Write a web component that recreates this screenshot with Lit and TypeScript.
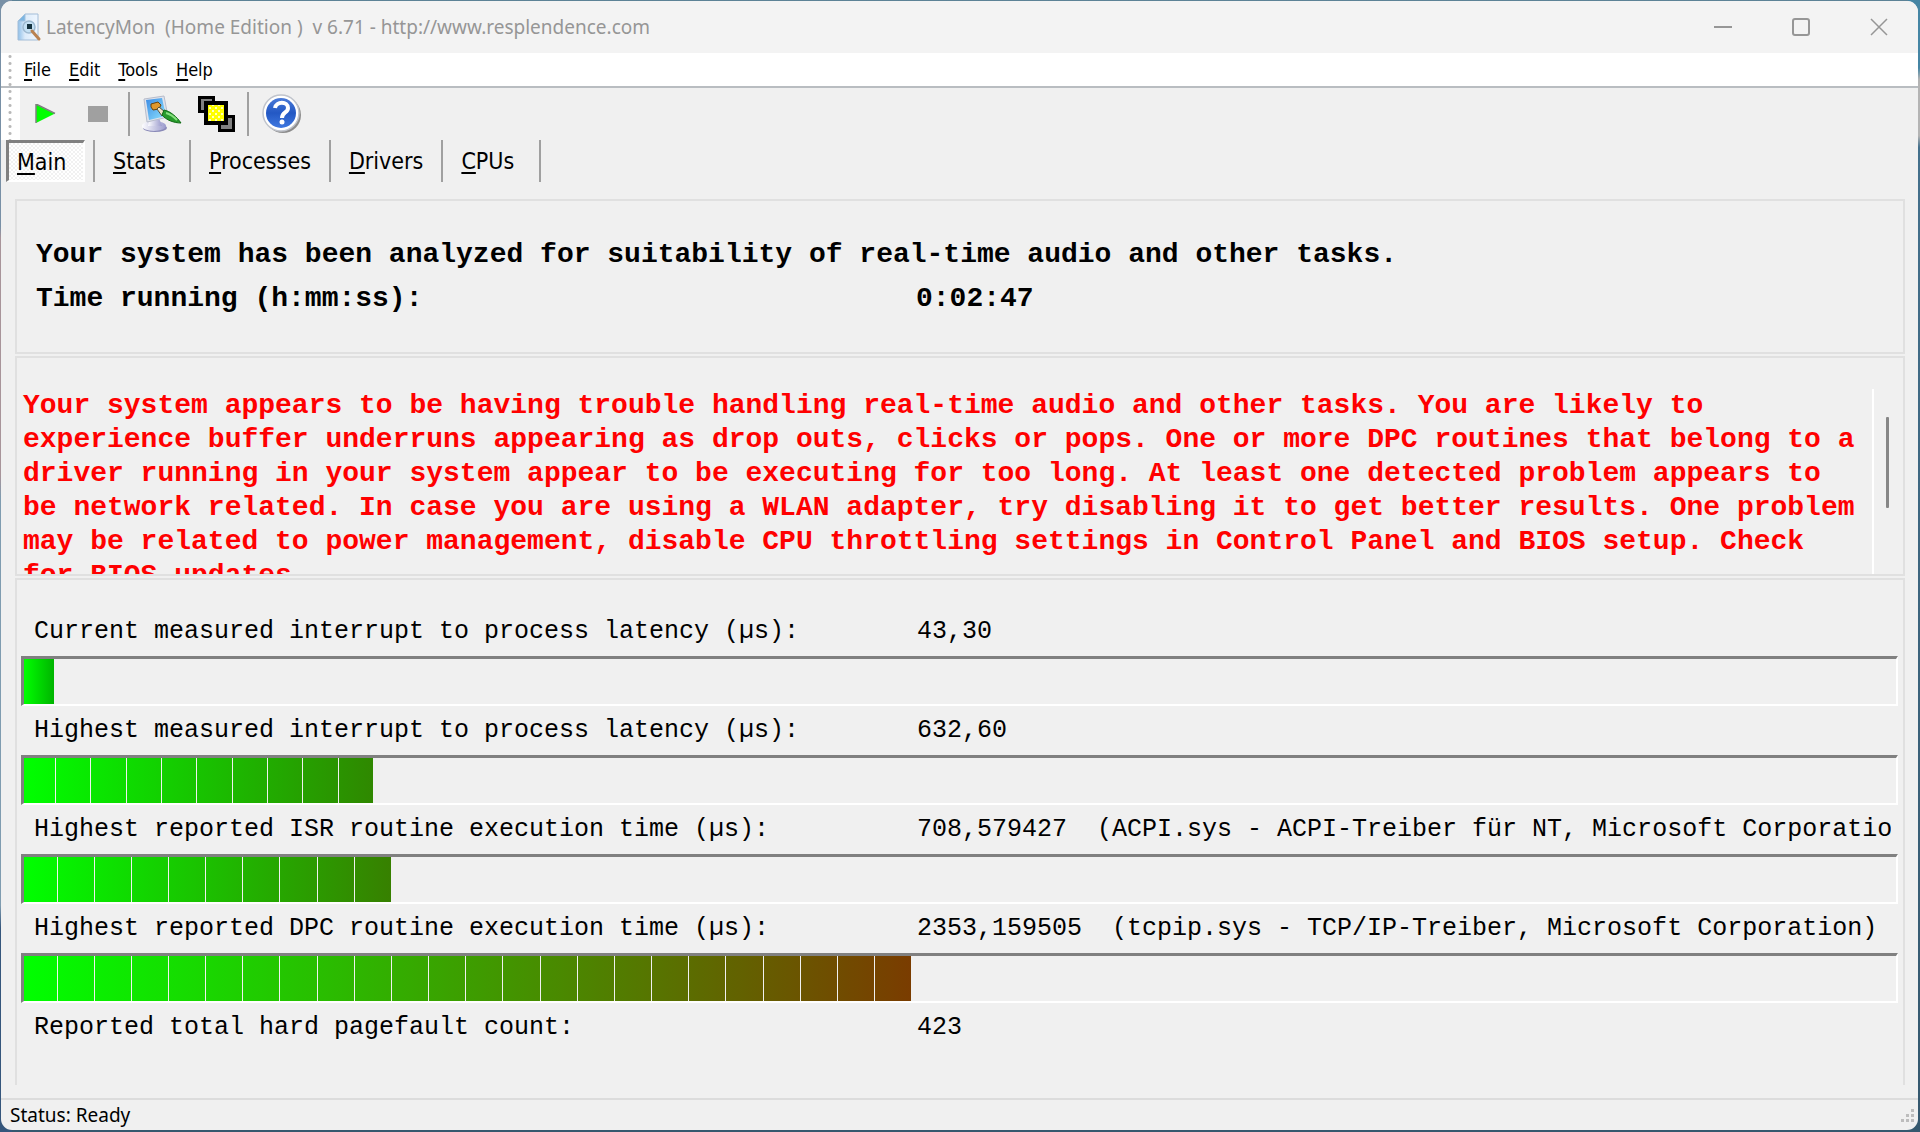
import { LitElement, html, css, nothing } from "lit";
import { customElement, property, state } from "lit/decorators.js";

interface Meter {
  label: string;
  value: string;
  detail?: string;
  percent?: number;
  segments?: number;
  endColor?: string;
}

const METERS: Meter[] = [
  { label: "Current measured interrupt to process latency (µs):", value: "43,30", percent: 1.6, segments: 1, endColor: "#00b400" },
  { label: "Highest measured interrupt to process latency (µs):", value: "632,60", percent: 18.65, segments: 10, endColor: "#2f8800" },
  { label: "Highest reported ISR routine execution time (µs):", value: "708,579427", detail: "(ACPI.sys - ACPI-Treiber für NT, Microsoft Corporation)", percent: 19.6, segments: 10, endColor: "#378000" },
  { label: "Highest reported DPC routine execution time (µs):", value: "2353,159505", detail: "(tcpip.sys - TCP/IP-Treiber, Microsoft Corporation)", percent: 47.4, segments: 24, endColor: "#7a3c00" },
  { label: "Reported total hard pagefault count:", value: "423" },
];

const TABS = ["Main", "Stats", "Processes", "Drivers", "CPUs"];
const MENUS = ["File", "Edit", "Tools", "Help"];

const mnemonic = (text: string) => html`<u>${text[0]}</u>${text.slice(1)}`;

const appIcon = html`<svg width="26" height="30" viewBox="0 0 26 30" aria-hidden="true">
  <defs><linearGradient id="sheet" x1="0" y1="0" x2="1" y2="0"><stop offset="0" stop-color="#8fbfe8"/><stop offset="0.350" stop-color="#dcebfa"/><stop offset="1" stop-color="#eef6ff"/></linearGradient></defs>
  <path d="M9 2h13v26H2V9z" fill="url(#sheet)" stroke="#a3bdd8"/>
  <path d="M9 2v7H2z" fill="#7db6e2" stroke="#a3c2de"/>
  <circle cx="13" cy="15" r="6" fill="#c4e0f4" stroke="#9db9d0" stroke-width="1.500"/>
  <path d="M11 12h5v5h-5z" fill="#15333f"/>
  <path d="M16 19l7 8" stroke="#b98252" stroke-width="3" stroke-linecap="round"/>
</svg>`;

const playIcon = html`<svg width="22" height="20" viewBox="0 0 22 20" aria-hidden="true">
  <path d="M1 0v19L20 9.500z" fill="#0f0"/><path d="M1 19V0l19 9.500" fill="none" stroke="#808080" stroke-width="1.500"/>
</svg>`;

const stopIcon = html`<svg width="20" height="16" viewBox="0 0 20 16" aria-hidden="true"><path d="M0 0h20v16H0z" fill="#a0a0a0"/></svg>`;

const optionsIcon = html`<svg width="40" height="38" viewBox="0 0 40 38" aria-hidden="true">
  <defs>
    <linearGradient id="screen" x1="0" y1="0" x2="1" y2="1"><stop offset="0" stop-color="#3a8ae4"/><stop offset="1" stop-color="#8fe4ff"/></linearGradient>
    <linearGradient id="base" x1="0" y1="0" x2="1" y2="0"><stop offset="0" stop-color="#fdfdff"/><stop offset="1" stop-color="#9a9acc"/></linearGradient>
  </defs>
  <ellipse cx="13" cy="33" rx="12" ry="4" fill="#8a8ab8"/>
  <ellipse cx="12" cy="31" rx="12" ry="5" fill="url(#base)"/>
  <path d="M8 23h9l3 8H6z" fill="url(#base)"/>
  <path d="M2 4L22 1l4 21-21 5z" fill="#dfe3ec" stroke="#b7bccb"/>
  <path d="M4 5l16-2 4 18-17 4z" fill="url(#screen)"/>
  <path d="M9 9l7-2 3 3-2 4-6 1-2-3z" fill="#e0982c" stroke="#6b430a"/>
  <path d="M17 12l6 5-3 4-5-7z" fill="#efe3c4" stroke="#57503c"/>
  <path d="M22 15c6 1 13 7 17 13-7 0-15-3-19-8z" fill="#279a2b" stroke="#0f6a14"/>
  <path d="M24 18c4 1 8 4 11 7" stroke="#86e07e" fill="none" stroke-width="2"/>
</svg>`;

const windowsIcon = html`<svg width="38" height="38" viewBox="0 0 38 38" aria-hidden="true" shape-rendering="crispEdges">
  <defs><pattern id="dither" width="6" height="6" patternUnits="userSpaceOnUse">
    <path d="M0 0h6v6H0z" fill="#ff0"/><path d="M0 0h2v2H0zM3 3h2v2H3z" fill="#ffffc0"/></pattern></defs>
  <path d="M2 2h14v14H2z" fill="#808080" stroke="#000" stroke-width="3"/>
  <path d="M22 21h14v14H22z" fill="#808080" stroke="#000" stroke-width="3"/>
  <path d="M9 8h20v20H9z" fill="url(#dither)" stroke="#000" stroke-width="4"/>
</svg>`;

const helpIcon = html`<svg width="42" height="42" viewBox="0 0 42 42" aria-hidden="true">
  <defs><linearGradient id="orb" x1="0" y1="0" x2="0" y2="1"><stop offset="0" stop-color="#4a7ad8"/><stop offset="0.500" stop-color="#2358c4"/><stop offset="1" stop-color="#3f78e0"/></linearGradient></defs>
  <circle cx="23" cy="22" r="18" fill="#8c8c8c"/>
  <circle cx="21" cy="20" r="18" fill="#fff" stroke="#c0c4cc" stroke-width="1.500"/>
  <circle cx="21" cy="20" r="15" fill="url(#orb)"/>
  <path d="M15 15c1-7 13-7 13 0 0 5-6 4-6 10" fill="none" stroke="#fff" stroke-width="4"/>
  <circle cx="22" cy="29" r="2.500" fill="#fff"/>
</svg>`;

@customElement("latency-meter")
export class LatencyMeter extends LitElement {
  @property({ attribute: false }) meter!: Meter;

  static styles = css`
    :host { display: block; }
    .line {
      display: grid;
      grid-template-columns: 883px minmax(0, 1fr);
      align-items: center;
      height: 49px;
      padding-left: 17px;
      padding-right: 12px;
      font-size: 25px;
      line-height: 30px;
      white-space: pre;
    }
    .value { overflow: hidden; }
    .track {
      box-sizing: border-box;
      height: 50px;
      margin: 0 5px 0 4px;
      border: 2px solid #fff;
      border-top: 3px solid #808080;
      border-left: 3px solid #808080;
    }
    .fill { display: flex; height: 100%; }
    .segment { flex: 1; border-left: 1px solid #f0f0f0; }
    .segment:first-child { flex: 0.9; border-left: 0; }
  `;

  render() {
    const m = this.meter;
    return html`
      <div class="line">
        <span id="label">${m.label}</span>
        <span class="value">${m.value}${m.detail ? "  " + m.detail : nothing}</span>
      </div>
      ${m.percent === undefined
        ? nothing
        : html`<div class="track" role="meter" aria-labelledby="label" aria-valuenow=${m.percent} aria-valuetext=${m.value}>
            <div class="fill" style="width:${m.percent}%;background:linear-gradient(90deg,#00ff00,${m.endColor})">
              ${Array.from({ length: m.segments ?? 0 }, () => html`<span class="segment"></span>`)}
            </div>
          </div>`}
    `;
  }
}

@customElement("app-root")
export class AppRoot extends LitElement {
  @state() private tab = "Main";

  static styles = css`
    :host {
      display: block;
      box-sizing: border-box;
      height: 100vh;
      min-height: 720px;
      padding: 1px 2px 2px 1px;
      background:
        linear-gradient(#7890a6 20%, #a8949a 21% 42%, #7f9cb0 44% 80%, #35567c 82%) left / 12px 100% no-repeat,
        linear-gradient(#4585a4 6%, #b4b4b4 7% 12%, #44708c 13%, #35586e) right / 12px 100% no-repeat,
        linear-gradient(#5c8296, #35586e);
      color: #000;
      font-family: "Noto Sans", "Open Sans", sans-serif;
    }
    button {
      margin: 0;
      padding: 0;
      border: 0;
      background: none;
      color: inherit;
      font: inherit;
    }
    svg { display: block; }
    u { text-underline-offset: 3px; text-decoration-thickness: 2px; text-decoration-skip-ink: none; }
    .window {
      display: flex;
      flex-direction: column;
      height: 100%;
      overflow: hidden;
      border-radius: 11px;
      background: #f0f0f0;
    }
    .titlebar {
      display: flex;
      align-items: center;
      flex: none;
      height: 52px;
      padding-left: 15px;
      background: #f3f3f3;
      color: #969696;
    }
    .title {
      flex: 1;
      margin: 0 0 0 4px;
      font-size: 19px;
      font-weight: 400;
      line-height: 28px;
      white-space: pre;
    }
    .caption { display: grid; place-items: center; width: 78px; height: 50px; }
    .menubar {
      display: flex;
      align-items: center;
      flex: none;
      height: 33px;
      background: #fff;
      border-bottom: 2px solid #b9bdc1;
      font-family: Tahoma, "DejaVu Sans Condensed", "Noto Sans", sans-serif;
      font-size: 18px;
      line-height: 24px;
    }
    .menus { display: flex; gap: 18px; margin-left: 4px; }
    .grip {
      align-self: stretch;
      width: 19px;
      background: radial-gradient(circle, #b8b8b8 1px, transparent 2px) 6px 0 / 6px 7px repeat-y #fff;
    }
    .toolbar {
      display: flex;
      align-items: center;
      flex: none;
      height: 52px;
    }
    .tool { display: grid; place-items: center; width: 54px; height: 46px; }
    .narrow { width: 52px; }
    .divider { width: 2px; height: 44px; margin: 0 5px 0 4px; background: #a0a0a0; }
    .tabs {
      display: flex;
      flex: none;
      height: 44px;
      padding-left: 5px;
      font-family: Tahoma, "DejaVu Sans Condensed", "Noto Sans", sans-serif;
      font-size: 23px;
      line-height: 30px;
    }
    .tab {
      display: flex;
      align-items: center;
      box-sizing: border-box;
      min-width: 98px;
      height: 42px;
      padding: 0 18px 0 18px;
      border-right: 2px solid #a0a0a0;
    }
    .tab[aria-selected="true"] {
      min-width: 79px;
      margin-right: 8px;
      padding: 0 16px 0 8px;
      border: 2px solid #fff;
      border-top: 3px solid #808080;
      border-left: 3px solid #808080;
      background: repeating-conic-gradient(#fff 0 25%, #f1f1f1 0 50%) 0 0 / 4px 4px;
    }
    .first { border-left: 2px solid #a0a0a0; }
    .page {
      display: flex;
      flex-direction: column;
      flex: 1;
      min-height: 0;
      gap: 2px;
      padding: 15px 13px 13px 14px;
      font-family: "Courier New", "Liberation Mono", monospace;
    }
    .group { box-sizing: border-box; border: 2px solid #e0e0e0; }
    .summary {
      display: grid;
      grid-template-columns: 880px 1fr;
      flex: none;
      height: 155px;
      padding: 32px 0 0 19px;
      grid-auto-rows: 44px;
      font-size: 28px;
      font-weight: 700;
      line-height: 44px;
    }
    .wide { grid-column: 1 / -1; }
    .verdict {
      display: flex;
      flex: none;
      height: 220px;
      padding: 31px 0 0 5px;
    }
    .message {
      flex: 1;
      margin: 0;
      padding: 0 10px 0 1px;
      overflow: hidden;
      border-right: 2px solid #fff;
      color: #f00;
      font-size: 28px;
      font-weight: 700;
      line-height: 34px;
    }
    .scroller { width: 29px; padding-top: 28px; box-sizing: border-box; }
    .thumb { width: 3px; height: 91px; margin-left: 12px; border-radius: 1px; background: #868686; }
    .meters {
      flex: 1;
      min-height: 0;
      overflow: hidden;
      padding-top: 27px;
      border-bottom: 0;
    }
    .status {
      display: flex;
      align-items: center;
      justify-content: space-between;
      flex: none;
      height: 30px;
      padding: 0 3px 0 9px;
      border-top: 2px solid #dcdcdc;
      font-size: 19px;
      line-height: 24px;
    }
  `;

  render() {
    return html`
      <main class="window">
        <header class="titlebar">
          ${appIcon}
          <h1 class="title">LatencyMon  (Home Edition )  v 6.71 - http://www.resplendence.com</h1>
          <button class="caption" aria-label="Minimize">
            <svg width="18" height="18" viewBox="0 0 18 18"><path d="M0 9h18" stroke="#969696" stroke-width="2"/></svg>
          </button>
          <button class="caption" aria-label="Maximize">
            <svg width="18" height="18" viewBox="0 0 18 18"><rect x="1" y="1" width="16" height="16" rx="2" fill="none" stroke="#969696" stroke-width="2"/></svg>
          </button>
          <button class="caption" aria-label="Close">
            <svg width="18" height="18" viewBox="0 0 18 18"><path d="M1 1l16 16M17 1L1 17" stroke="#969696" stroke-width="1.500"/></svg>
          </button>
        </header>
        <nav class="menubar" aria-label="Menu">
          <span class="grip"></span>
          <div class="menus">${MENUS.map((m) => html`<button>${mnemonic(m)}</button>`)}</div>
        </nav>
        <div class="toolbar" role="toolbar" aria-label="Tools">
          <span class="grip"></span>
          <button class="tool narrow" aria-label="Start monitoring">${playIcon}</button>
          <button class="tool narrow" aria-label="Stop monitoring">${stopIcon}</button>
          <span class="divider"></span>
          <button class="tool" aria-label="Options">${optionsIcon}</button>
          <button class="tool" aria-label="Stay on top">${windowsIcon}</button>
          <span class="divider"></span>
          <button class="tool" aria-label="Help">${helpIcon}</button>
        </div>
        <div class="tabs" role="tablist">
          ${TABS.map(
            (t, i) => html`<button
              class="tab ${i === 1 ? "first" : ""}"
              role="tab"
              aria-selected=${this.tab === t ? "true" : "false"}
              @click=${() => (this.tab = t)}
            ><span>${mnemonic(t)}</span></button>`,
          )}
        </div>
        <div class="page">
          <section class="group summary">
            <span class="wide">Your system has been analyzed for suitability of real-time audio and other tasks.</span>
            <span>Time running (h:mm:ss):</span>
            <span>0:02:47</span>
          </section>
          <section class="group verdict">
            <p class="message">Your system appears to be having trouble handling real-time audio and other tasks. You are likely to experience buffer underruns appearing as drop outs, clicks or pops. One or more DPC routines that belong to a driver running in your system appear to be executing for too long. At least one detected problem appears to be network related. In case you are using a WLAN adapter, try disabling it to get better results. One problem may be related to power management, disable CPU throttling settings in Control Panel and BIOS setup. Check for BIOS updates.</p>
            <div class="scroller"><div class="thumb"></div></div>
          </section>
          <section class="group meters">
            ${METERS.map((m) => html`<latency-meter .meter=${m}></latency-meter>`)}
          </section>
        </div>
        <footer class="status">
          <span>Status: Ready</span>
          <svg width="15" height="15" viewBox="0 0 15 15" aria-hidden="true">
            <path d="M11 1h3v3h-3zM6 6h3v3H6zM11 6h3v3h-3zM1 11h3v3H1zM6 11h3v3H6zM11 11h3v3h-3z" fill="#bdbdbd"/>
          </svg>
        </footer>
      </main>
    `;
  }
}
